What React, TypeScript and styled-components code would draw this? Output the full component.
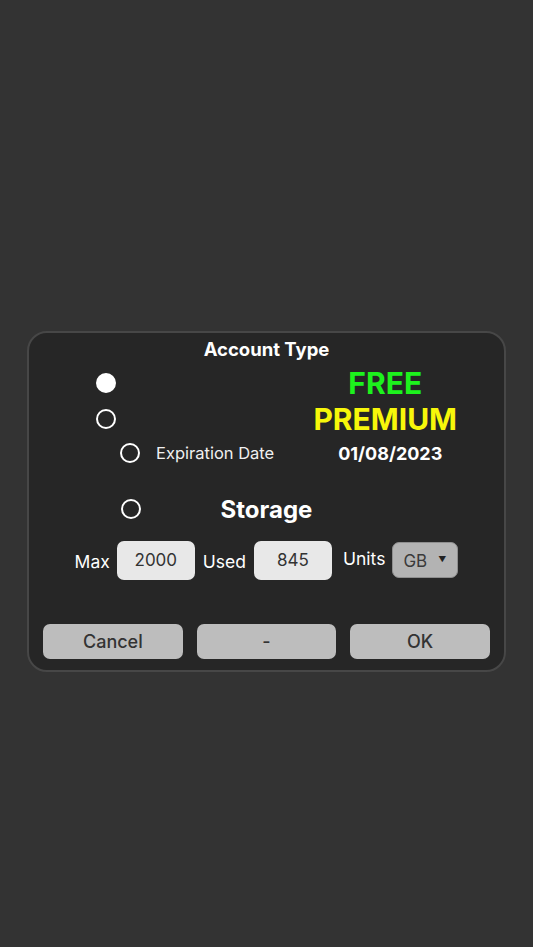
import styled, { createGlobalStyle } from 'styled-components'

const GlobalStyle = createGlobalStyle`
  html, body {
    margin: 0;
    padding: 0;
    background: #333333;
    font-family: Inter, "Noto Sans", sans-serif;
  }
`

const Page = styled.div`
  min-height: 947px;
  padding: 331px 27px 0;
  box-sizing: border-box;
`

const Dialog = styled.div`
  width: 479px;
  box-sizing: border-box;
  background: #262626;
  border: 2px solid #474747;
  border-radius: 20px;
  padding: 0 14px 11px;
  color: #ffffff;
`

const Title = styled.div`
  height: 32px;
  display: flex;
  align-items: center;
  justify-content: center;
  font-size: 18.5px;
  font-weight: 700;
`

const Row = styled.div<{ h: number }>`
  display: grid;
  grid-template-columns: minmax(0, 1fr) minmax(0, 1fr);
  align-items: center;
  height: ${(p) => p.h}px;
  margin: 0 -14px;
`

const Left = styled.div<{ indent: number }>`
  display: flex;
  align-items: center;
  gap: 16px;
  padding-left: ${(p) => p.indent}px;
  white-space: nowrap;
`

const Right = styled.div<{ shift?: number }>`
  text-align: center;
  padding-left: ${(p) => p.shift || 0}px;
`

const Radio = styled.span<{ checked?: boolean }>`
  width: 20px;
  height: 20px;
  box-sizing: border-box;
  border-radius: 50%;
  border: 2px solid #ffffff;
  background: ${(p) => (p.checked ? '#ffffff' : 'transparent')};
  flex: none;
`

const Plan = styled.span<{ color: string }>`
  font-size: 30px;
  font-weight: 700;
  color: ${(p) => p.color};
`

const Label = styled.span`
  font-size: 16.5px;
  color: #f0f0f0;
`

const DateText = styled.span`
  font-size: 18px;
  font-weight: 700;
`

const StorageRow = styled.div`
  margin-top: 22px;
  height: 36px;
  display: grid;
  grid-template-columns: 1fr auto 1fr;
  align-items: center;
  margin-left: -14px;
  margin-right: -14px;
`

const StorageTitle = styled.span`
  font-size: 24px;
  font-weight: 700;
`

const Fields = styled.div`
  margin-top: 13px;
  height: 40px;
  display: flex;
  align-items: center;
  justify-content: center;
`

const FieldLabel = styled.span<{ before: number; after: number; up?: boolean }>`
  font-size: 17.5px;
  margin-left: ${(p) => p.before}px;
  margin-right: ${(p) => p.after}px;
  position: relative;
  top: ${(p) => (p.up ? -2 : 1)}px;
`

const Input = styled.div`
  width: 78px;
  height: 39px;
  box-sizing: border-box;
  border-radius: 7px;
  background: #e8e8e8;
  color: #333333;
  font-size: 17px;
  display: flex;
  align-items: center;
  justify-content: center;
`

const Select = styled.div`
  width: 66px;
  height: 36px;
  box-sizing: border-box;
  margin-left: -1px;
  border-radius: 7px;
  border: 1px solid #8e8e8e;
  background: #b3b3b3;
  color: #3a3a3a;
  font-size: 17px;
  display: flex;
  align-items: center;
  justify-content: space-between;
  padding: 2px 11px 0 10px;
`

const Caret = styled.span`
  font-size: 8px;
  color: #222;
  margin-top: -4px;
`

const Buttons = styled.div`
  margin-top: 44px;
  display: grid;
  grid-template-columns: repeat(3, 1fr);
  gap: 14px;
`

const Button = styled.button`
  height: 35px;
  border: none;
  border-radius: 7px;
  background: #bdbdbd;
  color: #333333;
  font-family: Inter, sans-serif;
  font-size: 18px;
  font-weight: 500;
`

export default function App() {
  return (
    <>
      <GlobalStyle />
      <Page>
        <Dialog>
          <Title>Account Type</Title>
          <Row h={36}>
            <Left indent={67}>
              <Radio checked />
            </Left>
            <Right>
              <Plan color="#1df21d">FREE</Plan>
            </Right>
          </Row>
          <Row h={36}>
            <Left indent={67}>
              <Radio />
            </Left>
            <Right>
              <Plan color="#f7f70a">PREMIUM</Plan>
            </Right>
          </Row>
          <Row h={32}>
            <Left indent={91}>
              <Radio />
              <Label>Expiration Date</Label>
            </Left>
            <Right shift={10}>
              <DateText>01/08/2023</DateText>
            </Right>
          </Row>
          <StorageRow>
            <Left indent={92}>
              <Radio />
            </Left>
            <StorageTitle>Storage</StorageTitle>
            <span />
          </StorageRow>
          <Fields>
            <FieldLabel before={0} after={7}>
              Max
            </FieldLabel>
            <Input>2000</Input>
            <FieldLabel before={8} after={8}>
              Used
            </FieldLabel>
            <Input>845</Input>
            <FieldLabel before={11} after={8} up>
              Units
            </FieldLabel>
            <Select>
              GB <Caret>▼</Caret>
            </Select>
          </Fields>
          <Buttons>
            <Button>Cancel</Button>
            <Button>-</Button>
            <Button>OK</Button>
          </Buttons>
        </Dialog>
      </Page>
    </>
  )
}
